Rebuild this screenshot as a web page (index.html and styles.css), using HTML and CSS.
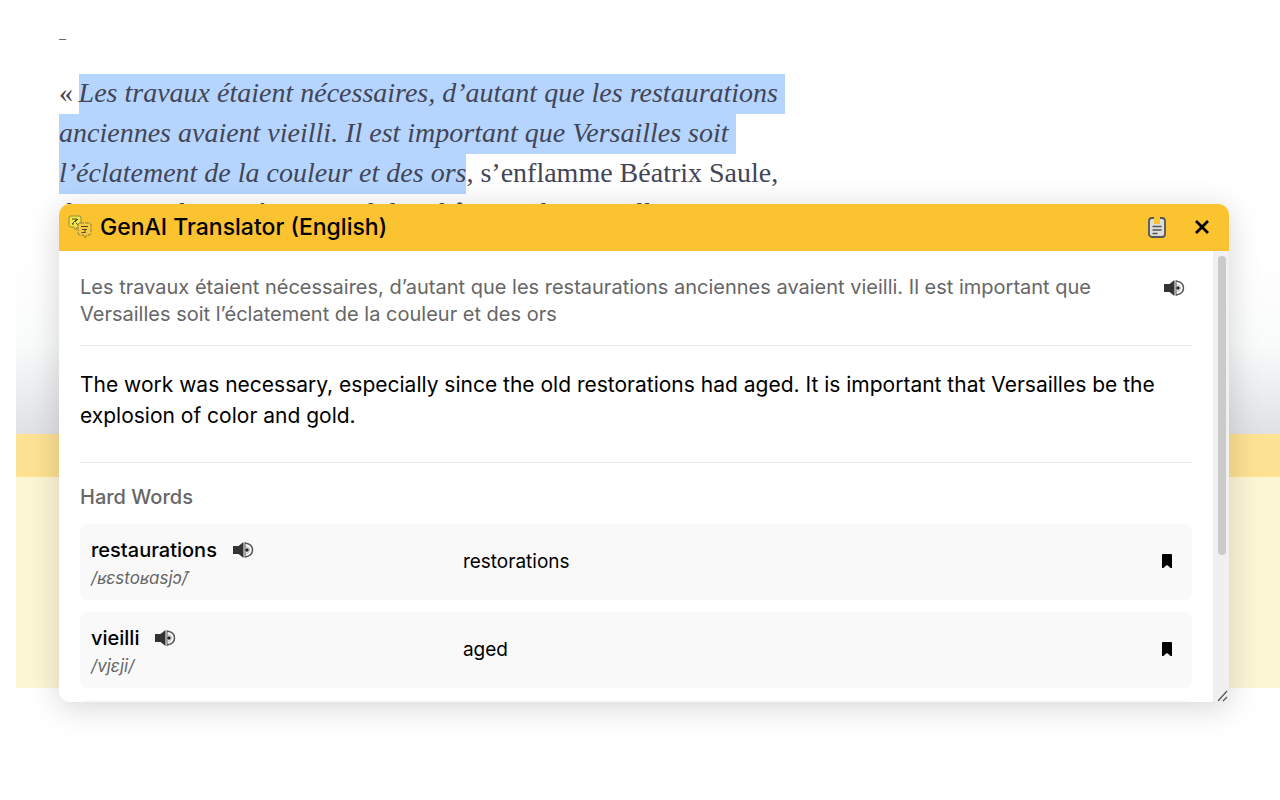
FILE: index.html
```html
<!DOCTYPE html>
<html lang="fr">
<head>
    <meta charset="UTF-8">
    <meta name="viewport" content="width=device-width, initial-scale=1.0">
    <title>GenAI Translator</title>
    <link rel="stylesheet" href="styles.css">
</head>
<body>

<svg class="symbols" aria-hidden="true">
    <symbol id="speaker" viewBox="0 0 22 18">
        <path d="M1 5h5.500L11.500 1v16L6.500 13H1z" fill="#333"/>
        <path d="M13 1.500v15" stroke="#666" stroke-width="1.200"/>
        <path d="M13 2q7.500 1 7.500 7T13 16" fill="none" stroke="#555" stroke-width="1.500"/>
        <path d="M14 5.500a3.500 3.500 0 0 1 0 7" fill="none" stroke="#bbb" stroke-width="1"/>
        <circle cx="15" cy="9" r="1.700" fill="#222"/>
    </symbol>
    <symbol id="bookmark" viewBox="0 0 12 14">
        <path d="M2 0h8q1 0 1 1v13h-1.500L8 12.500 6 11l-2 1.500L2.500 14H1V1q0-1 1-1z"/>
    </symbol>
</svg>

<article class="article">
    <p class="dash">–</p>
    <p class="quote">«&thinsp;<mark>Les travaux étaient nécessaires, d’autant que les restaurations&nbsp;<br>anciennes avaient vieilli. Il est important que Versailles soit&nbsp;<br>l’éclatement de la couleur et des ors</mark>, s’enflamme Béatrix Saule,<br>directrice du musée national des châteaux de Versailles</p>
</article>

<div class="banner">
    <div class="banner-fade"></div>
    <div class="banner-strip"></div>
    <div class="banner-body"></div>
</div>

<section class="popup" lang="en">
    <header class="popup-header">
        <svg class="logo" viewBox="0 0 24 24" fill="none" stroke="#6b6630">
            <path d="M3 1h8q2 0 2 2v7q0 2-2 2H9l-1.500 3L6 12H3q-2 0-2-2V3q0-2 2-2z" fill="#f0e846" stroke="#8f8a35"/>
            <path d="M4 4h5l-5 5h2M7 7l3-3M8 8l2 2" stroke="#4d4920"/>
            <path d="M12 8h9q2 0 2 2v8q0 2-2 2h-2.500L17 23l-1.500-3H12q-2 0-2-2v-8q0-2 2-2z" fill="#f7c944" stroke="#8f7d35" stroke-dasharray="4 1"/>
            <path d="M13 11.500h7M14 14.500h5M13.500 17.500h4M17 14v4" stroke="#4d4920"/>
        </svg>
        <h1>GenAI Translator (English)</h1>
        <button class="icon-btn copy" aria-label="Copy">
            <svg width="20" height="24" viewBox="0 0 20 24">
                <rect x="2" y="3" width="16" height="19" rx="3" fill="#ddd" stroke="#555" stroke-width="1.800"/>
                <path d="M7 2h6v7H7z" fill="#fcc331"/>
                <path d="M5.500 11.500h9M5.500 15h9M5.500 18.500h5" stroke="#555" stroke-width="1.500"/>
            </svg>
        </button>
        <button class="icon-btn close" aria-label="Close">
            <svg width="16" height="16" viewBox="0 0 16 16"><path d="M2 2l12 12M14 2L2 14" stroke="#000" stroke-width="2.800"/></svg>
        </button>
    </header>
    <div class="popup-main">
        <div class="popup-content">
            <div class="source">
                <p lang="fr">Les travaux étaient nécessaires, d’autant que les restaurations anciennes avaient vieilli. Il est important que Versailles soit l’éclatement de la couleur et des ors</p>
                <button class="icon-btn" aria-label="Listen"><svg class="speaker"><use href="#speaker"/></svg></button>
            </div>
            <p class="translation">The work was necessary, especially since the old restorations had aged. It is important that Versailles be the explosion of color and gold.</p>
            <h2>Hard Words</h2>
            <ul class="words">
                <li class="word">
                    <div class="term">
                        <div class="term-line"><strong>restaurations</strong><button class="icon-btn" aria-label="Listen"><svg class="speaker"><use href="#speaker"/></svg></button></div>
                        <em>/ʁɛstoʁasjɔ̃/</em>
                    </div>
                    <span class="meaning">restorations</span>
                    <button class="icon-btn" aria-label="Save"><svg class="bookmark"><use href="#bookmark"/></svg></button>
                </li>
                <li class="word">
                    <div class="term">
                        <div class="term-line"><strong>vieilli</strong><button class="icon-btn" aria-label="Listen"><svg class="speaker"><use href="#speaker"/></svg></button></div>
                        <em>/vjɛji/</em>
                    </div>
                    <span class="meaning">aged</span>
                    <button class="icon-btn" aria-label="Save"><svg class="bookmark"><use href="#bookmark"/></svg></button>
                </li>
                <li class="word"></li>
            </ul>
        </div>
        <div class="scroll-track"><div class="scroll-thumb"></div></div>
    </div>
    <svg class="resizer" viewBox="0 0 12 12"><path d="M1 11L10 1M6 11l4-4" stroke="#555" stroke-width="1.200"/></svg>
</section>

</body>
</html>
```

FILE: styles.css
```css
* {
    margin: 0;
    padding: 0;
    box-sizing: border-box;
}
body {
    background: #fff;
    font-family: Inter, sans-serif;
    color: #000;
}
ul {
    list-style: none;
}
.symbols {
    display: none;
}

/* page behind the popup */
.article {
    height: 204px;
    padding: 29px 59px 0;
    overflow: hidden;
    font-family: "Liberation Serif", serif;
    color: #434556;
}
.dash {
    height: 44px;
    font-size: 14px;
    line-height: 20px;
}
.quote {
    font-size: 28px;
    line-height: 40px;
    white-space: nowrap;
}
.quote mark {
    padding: 3px 0 6px;
    background: #b5d5ff;
    color: inherit;
    font-style: italic;
}
.banner {
    margin: 46px 0 0 16px;
}
.banner-fade {
    height: 184px;
    background: linear-gradient(#fff, #fafbfb 50%, #e0e1e5);
}
.banner-strip {
    height: 43px;
    background: #fde293;
}
.banner-body {
    height: 211px;
    background: #fdf6d5;
}

/* popup */
.popup {
    position: absolute;
    top: 204px;
    left: 59px;
    right: 51px;
    height: 498px;
    display: flex;
    flex-direction: column;
    overflow: hidden;
    background: #fff;
    border-radius: 11px 11px 0 11px;
    box-shadow: 0 5px 32px rgba(0, 0, 0, .17);
}
.popup-header {
    display: flex;
    align-items: center;
    flex-shrink: 0;
    height: 47px;
    padding: 0 19px 2px 9px;
    background: #fcc331;
}
.popup-header h1 {
    flex: 1;
    font-size: 23px;
    font-weight: 500;
    line-height: 30px;
}
.logo {
    width: 24px;
    height: 24px;
    margin-right: 8px;
}
.icon-btn {
    display: flex;
    border: 0;
    background: none;
    cursor: pointer;
}
.copy {
    margin-right: 27px;
}
.popup-main {
    display: flex;
    flex: 1;
    min-height: 0;
}
.popup-content {
    flex: 1;
    padding: 23px 21px 0;
    overflow: hidden;
}
.source {
    display: flex;
    align-items: flex-start;
    justify-content: space-between;
    padding: 0 7px 17px 0;
    border-bottom: 1px solid #e8e8e8;
    color: #666;
    font-size: 20px;
    line-height: 27px;
}
.source p {
    max-width: 1020px;
}
.source .icon-btn {
    margin-top: 5px;
}
.speaker {
    width: 22px;
    height: 18px;
}
.translation {
    padding: 23px 0 31px;
    border-bottom: 1px solid #e8e8e8;
    font-size: 21px;
    line-height: 31px;
}
.popup h2 {
    padding: 21px 0 13px;
    color: #666;
    font-size: 20px;
    font-weight: 500;
    line-height: 27px;
}
.words {
    display: flex;
    flex-direction: column;
    gap: 12px;
}
.word {
    display: grid;
    grid-template-columns: 34% 1fr auto;
    column-gap: 4px;
    align-items: center;
    min-height: 76px;
    padding: 0 19px 2px 11px;
    border-radius: 8px;
    background: #f9f9f9;
    font-size: 19px;
}
.term {
    padding-top: 6px;
}
.term-line {
    display: flex;
    align-items: center;
    gap: 15px;
    font-size: 20px;
    line-height: 28px;
}
.term strong {
    font-weight: 500;
}
.term em {
    display: block;
    color: #666;
    font-size: 17px;
    line-height: 28px;
}
.bookmark {
    width: 12px;
    height: 14px;
}
.scroll-track {
    width: 16px;
    padding: 5px 3px 0 5px;
    background: #f0f0f0;
}
.scroll-thumb {
    height: 299px;
    border-radius: 4px;
    background: #cacaca;
}
.resizer {
    position: absolute;
    right: 0;
    bottom: 0;
    width: 12px;
    height: 12px;
}
```
